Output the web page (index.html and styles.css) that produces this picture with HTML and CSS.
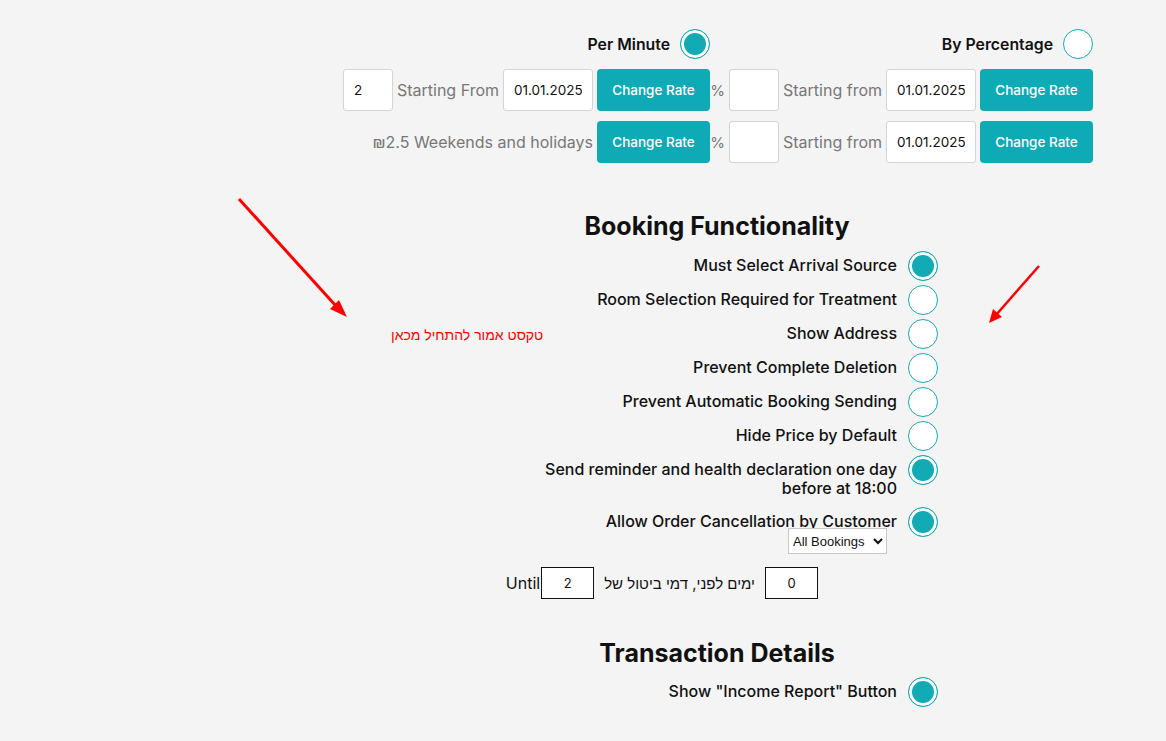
FILE: index.html
```html
<!DOCTYPE html>
<html lang="en">
<head>
<meta charset="utf-8">
<title>Settings</title>
<link rel="stylesheet" href="styles.css">
</head>
<body>
<div class="page">
  <div class="rates">
    <div class="cell">
      <span class="head-label">Per Minute</span>
      <input type="radio" class="radio" name="rate" checked>
    </div>
    <div class="cell">
      <span class="head-label">By Percentage</span>
      <input type="radio" class="radio" name="rate">
    </div>

    <div class="cell">
      <input class="box small" type="text" value="2">
      <span class="muted">Starting From</span>
      <input class="box date" type="text" value="01.01.2025">
      <button class="btn">Change Rate</button>
    </div>
    <div class="cell">
      <span class="muted pct">%</span>
      <input class="box small" type="text" value="">
      <span class="muted">Starting from</span>
      <input class="box date" type="text" value="01.01.2025">
      <button class="btn">Change Rate</button>
    </div>

    <div class="cell">
      <span class="muted">₪2.5 Weekends and holidays</span>
      <button class="btn">Change Rate</button>
    </div>
    <div class="cell">
      <span class="muted pct">%</span>
      <input class="box small" type="text" value="">
      <span class="muted">Starting from</span>
      <input class="box date" type="text" value="01.01.2025">
      <button class="btn">Change Rate</button>
    </div>
  </div>

  <div class="sections">
    <div class="section">
      <h2 class="title">Booking Functionality</h2>
      <div class="opt"><span class="lbl">Must Select Arrival Source</span><input type="radio" class="radio" checked></div>
      <div class="opt"><span class="lbl">Room Selection Required for Treatment</span><input type="radio" class="radio"></div>
      <div class="opt"><span class="lbl">Show Address</span><input type="radio" class="radio"></div>
      <div class="opt"><span class="lbl">Prevent Complete Deletion</span><input type="radio" class="radio"></div>
      <div class="opt"><span class="lbl">Prevent Automatic Booking Sending</span><input type="radio" class="radio"></div>
      <div class="opt"><span class="lbl">Hide Price by Default</span><input type="radio" class="radio"></div>
      <div class="opt"><span class="lbl">Send reminder and health declaration one day before at 18:00</span><input type="radio" class="radio" checked></div>
      <div class="opt">
        <div class="lbl-group">
          <span class="lbl tight">Allow Order Cancellation by Customer</span>
          <select class="sel"><option>All Bookings</option></select>
        </div>
        <input type="radio" class="radio" checked>
      </div>
      <div class="until">
        <span class="until-text">Until</span>
        <input class="sq" type="text" value="2">
        <span class="heb" dir="rtl">ימים לפני, דמי ביטול של</span>
        <input class="sq" type="text" value="0">
      </div>

      <h2 class="title second">Transaction Details</h2>
      <div class="opt"><span class="lbl">Show "Income Report" Button</span><input type="radio" class="radio" checked></div>
    </div>
  </div>

  <div class="note" dir="rtl">טקסט אמור להתחיל מכאן</div>
  <svg class="arrow arrow-left" width="130" height="140" viewBox="0 0 130 140">
    <line x1="3" y1="3" x2="100" y2="110" stroke="#ff0000" stroke-width="3"/>
    <polygon points="111,121 94,113 103,104" fill="#ff0000"/>
  </svg>
  <svg class="arrow arrow-right" width="60" height="66" viewBox="0 0 60 66">
    <line x1="55" y1="2" x2="12" y2="51" stroke="#ff0000" stroke-width="2.5"/>
    <polygon points="5,59 9,45 18,53" fill="#ff0000"/>
  </svg>
</div>
</body>
</html>
```

FILE: styles.css
```css
* { box-sizing: border-box; }

html, body {
  margin: 0;
  padding: 0;
  background: #f4f4f4;
}

body {
  font-family: "Inter", "Noto Sans", sans-serif;
  color: #111;
  width: 1166px;
  height: 741px;
  overflow: hidden;
}

.page {
  position: relative;
  height: 741px;
}

/* ---------- top rates grid ---------- */
.rates {
  display: grid;
  grid-template-columns: 1fr 381px;
  column-gap: 2px;
  row-gap: 10px;
  padding: 29px 73px 0 0;
}

.cell {
  display: flex;
  justify-content: flex-end;
  align-items: center;
  gap: 4px;
}

.cell > * {
  flex-shrink: 0;
}

.head-label {
  font-size: 15.8px;
  font-weight: 600;
  margin-right: 6px;
  white-space: nowrap;
}

.muted {
  font-size: 16px;
  color: #777;
  white-space: nowrap;
}

.pct {
  font-size: 15px;
}

.box {
  height: 42px;
  border: 1px solid #d4d4d4;
  border-radius: 3px;
  background: #fff;
  font-family: inherit;
  font-size: 13.5px;
  color: #111;
  padding: 0 10px;
  outline: none;
}

.box.small { width: 50px; }
.box.date { width: 90px; }

.btn {
  width: 113px;
  height: 42px;
  border: none;
  border-radius: 4px;
  background: #0eaab6;
  color: #fff;
  font-family: inherit;
  font-size: 13.5px;
  font-weight: 500;
  cursor: pointer;
}

/* ---------- radio ---------- */
.radio {
  -webkit-appearance: none;
  appearance: none;
  margin: 0;
  width: 30px;
  height: 30px;
  flex: 0 0 30px;
  border-radius: 50%;
  border: 1.5px solid #16aab4;
  background: #fff;
}

.radio:checked {
  background: #12abb5;
  box-shadow: inset 0 0 0 3px #fff;
}

/* ---------- sections ---------- */
.sections {
  display: flex;
  justify-content: flex-end;
  padding-right: 228px;
}

.section {
  width: 442px;
}

.title {
  margin: 49px 0 10px;
  font-size: 25px;
  line-height: 29px;
  font-weight: 700;
  text-align: center;
}

.title.second {
  margin-top: 40px;
  margin-bottom: 9px;
}

.opt {
  display: flex;
  justify-content: flex-end;
  align-items: flex-start;
  gap: 11px;
  margin-bottom: 4px;
}

.lbl {
  display: block;
  max-width: 370px;
  padding: 5px 0;
  font-size: 16px;
  line-height: 19px;
  font-weight: 500;
  text-align: right;
}

.lbl-group {
  display: flex;
  flex-direction: column;
  align-items: flex-end;
}

.lbl.tight {
  padding-bottom: 0;
}

.sel {
  margin: -3px 10px 0 0;
  width: 99px;
  height: 26px;
  font-family: "Liberation Sans", Arial, sans-serif;
  font-size: 13px;
  color: #111;
  background: #fff;
  border: 1px solid #c8c8c8;
  border-radius: 0;
}

.until {
  display: flex;
  justify-content: flex-end;
  align-items: center;
  margin-top: 13px;
  padding-right: 120px;
}

.until-text {
  font-size: 16px;
  margin-right: 1px;
}

.sq {
  width: 53px;
  height: 32px;
  border: 1px solid #111;
  background: #fff;
  text-align: center;
  font-family: inherit;
  font-size: 13px;
  color: #111;
  padding: 0;
  outline: none;
}

.heb {
  margin: 0 10px;
  font-size: 15px;
  white-space: nowrap;
}

/* ---------- annotations (overlays) ---------- */
.note {
  position: absolute;
  left: 391px;
  top: 326px;
  width: 153px;
  color: #ff0000;
  font-family: "Liberation Sans", Arial, sans-serif;
  font-size: 14px;
  line-height: 18px;
  text-align: left;
  white-space: nowrap;
}

.arrow {
  position: absolute;
  overflow: visible;
}

.arrow-left { left: 236px; top: 196px; }
.arrow-right { left: 984px; top: 264px; }
```
